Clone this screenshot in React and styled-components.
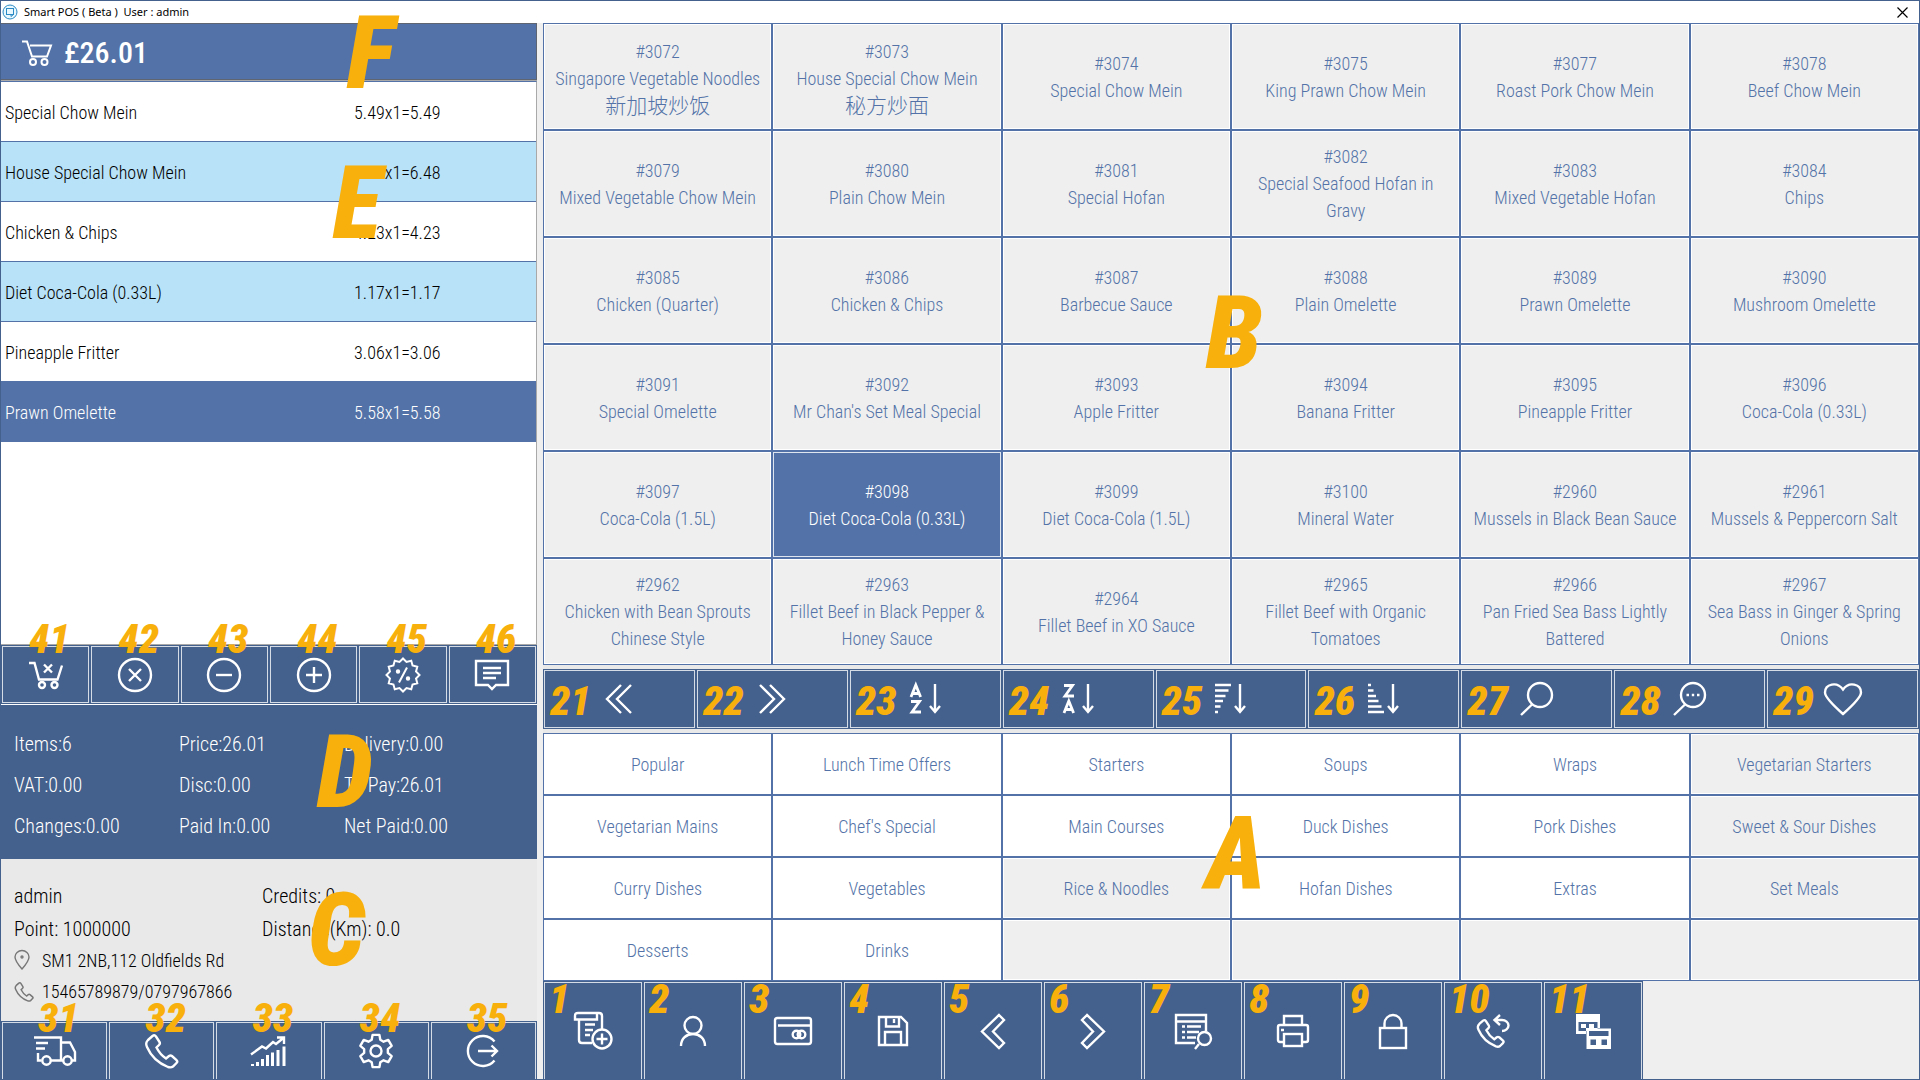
import React, { useState } from "react";
import styled, { createGlobalStyle, ThemeProvider, css } from "styled-components";

const theme = {
  navy: "#44608c",
  blue: "#5373a8",
  sky: "#b8e2f7",
  grey: "#efefef",
  panel: "#e9e9e9",
  orange: "#f8b00c",
};

const GlobalStyle = createGlobalStyle`
  * { box-sizing: border-box; }
  body { margin: 0; background: #efefef; }
  button { font: inherit; color: inherit; border: 0; padding: 0; margin: 0; cursor: pointer; border-radius: 0; }
  svg { display: block; flex: none; }
`;

const Window = styled.div`
  display: flex;
  flex-direction: column;
  height: 100vh;
  min-height: 900px;
  border: 1px solid ${(p) => p.theme.navy};
  background: ${(p) => p.theme.grey};
  font-family: "Roboto Condensed", Roboto, "Noto Sans CJK SC", sans-serif;
  font-weight: 300;
  font-size: 18px;
`;

const TitleBar = styled.header`
  display: flex;
  align-items: center;
  gap: 6px;
  height: 22px;
  flex: none;
  padding: 0 11px 0 1px;
  background: #fff;
  color: #000;
`;

const Title = styled.h1`
  flex: 1;
  margin: 0;
  font: 400 11px/20px "Noto Sans", sans-serif;
  white-space: pre;
`;

const CloseButton = styled.button`
  background: none;
`;

const Body = styled.main`
  flex: 1;
  min-height: 0;
  display: grid;
  grid-template-columns: minmax(0, 536fr) minmax(0, 1376fr);
  gap: 6px;
`;

const Column = styled.div`
  display: flex;
  flex-direction: column;
  min-height: 0;
`;

const RightColumn = styled(Column)`
  background: ${(p) => p.theme.panel};
`;

const Marker = styled.span`
  position: absolute;
  left: ${(p) => p.$left}px;
  top: ${(p) => p.$top}px;
  z-index: 2;
  color: ${(p) => p.theme.orange};
  font-style: italic;
  font-weight: 900;
  font-size: ${(p) => (p.$large ? 102 : 41)}px;
  line-height: ${(p) => (p.$large ? 74 : 30)}px;
  pointer-events: none;
`;

const Total = styled.section`
  position: relative;
  display: flex;
  align-items: center;
  gap: 12px;
  height: 58px;
  flex: none;
  padding: 2px 0 0 21px;
  background: ${(p) => p.theme.blue};
  border-top: 1px solid #5f6672;
  border-bottom: 1px solid #a9a9a9;
  box-shadow: inset -1px -1px #5f6672;
  color: #fff;
`;

const TotalAmount = styled.output`
  font-size: 30px;
  font-weight: 500;
  line-height: 36px;
`;

const OrderPanel = styled.section`
  position: relative;
  flex: 1;
  min-height: 0;
  background: #fff;
  border-top: 1px solid ${(p) => p.theme.blue};
  border-right: 1px solid #a9a9a9;
  border-bottom: 1px solid #a9a9a9;
`;

const OrderTable = styled.table`
  width: 100%;
  border-collapse: separate;
  border-spacing: 0;
  table-layout: fixed;
`;

const OrderRow = styled.tr`
  height: 60px;
  color: #000;
  background: ${(p) => (p.$striped ? p.theme.sky : "#fff")};
  ${(p) =>
    p.$selected &&
    css`
      color: #fff;
      background: ${p.theme.blue};
    `}
`;

const OrderCell = styled.td`
  width: ${(p) => p.$width};
  padding: 2px 0 0 ${(p) => (p.$first ? 4 : 0)}px;
  border-bottom: 1px solid ${(p) => p.theme.blue};
  text-align: left;
`;

const ButtonBar = styled.nav`
  display: grid;
  grid-auto-flow: column;
  grid-auto-columns: minmax(0, 1fr);
  flex: none;
  height: ${(p) => p.$height}px;
  margin: ${(p) => p.$margin || "0"};
  background: ${(p) => p.theme.navy};
  border-bottom: ${(p) => (p.$rule ? "1px solid #fff" : "0")};
`;

const IconButton = styled.button`
  position: relative;
  display: flex;
  align-items: center;
  justify-content: center;
  margin: 1px;
  background: ${(p) => p.theme.navy};
  border: 1px solid #d5dce6;
  border-bottom-width: ${(p) => (p.$open ? 0 : 1)}px;
  margin-bottom: ${(p) => (p.$open ? 0 : 1)}px;
  color: #fff;
`;

const Summary = styled.section`
  position: relative;
  flex: none;
  display: grid;
  grid-template-columns: repeat(3, 1fr);
  grid-auto-rows: 41px;
  align-items: center;
  height: 154px;
  padding: 18px 28px 0 13px;
  background: ${(p) => p.theme.navy};
  color: #fff;
  font-size: 20px;
`;

const Customer = styled.section`
  position: relative;
  flex: none;
  display: grid;
  grid-template-columns: 1fr 1fr;
  grid-template-rows: 33px 33px 30px 33px;
  align-items: center;
  height: 162px;
  padding: 20px 27px 0 13px;
  background: ${(p) => p.theme.panel};
  color: #000;
  font-size: 20px;
`;

const Contact = styled.span`
  grid-column: 1 / -1;
  display: flex;
  align-items: center;
  font-size: 18px;
`;

const ContactIcon = styled.span`
  display: flex;
  width: 28px;
  color: #777;
`;

const CellGrid = styled.section`
  position: relative;
  display: grid;
  grid-template-columns: repeat(6, minmax(0, 1fr));
  grid-auto-rows: minmax(0, 1fr);
  flex: ${(p) => (p.$height ? "none" : "1")};
  height: ${(p) => (p.$height ? p.$height + "px" : "auto")};
  min-height: 0;
`;

const Cell = styled.button`
  display: flex;
  flex-direction: column;
  align-items: center;
  justify-content: center;
  padding: 0 8px;
  line-height: 27px;
  text-align: center;
  color: ${(p) => p.theme.blue};
  background: ${(p) => (p.$filled ? p.theme.grey : "#fff")};
  border: 1px solid ${(p) => p.theme.blue};
  box-shadow: inset 0 0 0 1px #fff;
  ${(p) =>
    p.$selected &&
    css`
      color: #fff;
      background: ${p.theme.blue};
      box-shadow: inset 0 0 0 1px #dfe5ef;
    `}
`;

const Translation = styled.span`
  font: 300 21px/24px "Noto Sans CJK SC", sans-serif;
`;

const Footer = styled.footer`
  flex: none;
  display: grid;
  grid-template-columns: minmax(0, 1100fr) minmax(0, 276fr);
  height: 98px;
  background: ${(p) => p.theme.grey};
`;

const Svg = ({ w, h, sw = 2.4, children }) => (
  <svg width={w} height={h} viewBox={`0 0 ${w} ${h}`} fill="none" stroke="currentColor" strokeWidth={sw} overflow="visible" aria-hidden="true">
    {children}
  </svg>
);

const polar = (cx, cy, list) =>
  list.map(([r, deg]) => {
    const a = ((deg - 90) * Math.PI) / 180;
    return `${(cx + r * Math.cos(a)).toFixed(2)},${(cy + r * Math.sin(a)).toFixed(2)}`;
  }).join(" ");

const badgePoints = polar(17, 17, Array.from({ length: 24 }, (_, i) => [i % 2 ? 13.5 : 16.5, i * 15]));
const gearPoints = polar(
  17, 17,
  Array.from({ length: 6 }, (_, i) => [[12, i * 60 - 21], [16.5, i * 60 - 12], [16.5, i * 60 + 12], [12, i * 60 + 21]]).flat()
);

const phonePath =
  "M4 6 L8.5 2 Q10.5 .5 12 2.500 L15.500 8 Q16.500 9.500 15 11 L12.500 13.500 Q16 20.500 22 24.500 L25 22 Q26.500 21 28 22 L32.500 26 Q34 27.500 32.500 29 L29 32.500 Q27 34 24 33 Q9 27 3 13 Q1 9 4 6Z";

const ArrowDown = () => <path d="M25 0V28M20 22L25 28L30 22" />;

const icons = {
  app: (
    <Svg w={16} h={16} sw={1}>
      <circle cx="8" cy="8" r="7" stroke="#2b8bc4" fill="#e8f6fd" />
      <rect x="4.500" y="4.500" width="7" height="6" stroke="#2b8bc4" />
      <path d="M9 10.500V12.500L11.500 10.500" stroke="#2b8bc4" />
    </Svg>
  ),
  close: <Svg w={11} h={11} sw={1.2}><path d="M.5.5L10.500 10.500M10.500.5L.5 10.500" /></Svg>,
  cart: (
    <Svg w={30} h={26} sw={2}>
      <path d="M0 1.500H5L10 16.500H25L29 5.500H8" />
      <circle cx="11" cy="22" r="3" /><circle cx="22.500" cy="22" r="3" />
    </Svg>
  ),
  cartX: (
    <Svg w={34} h={28}>
      <path d="M0 2H5.500L10 18.500H28.500L33 4.500M15 3.500L23 11.500M23 3.500L15 11.500" />
      <circle cx="13" cy="24" r="3" /><circle cx="25.500" cy="24" r="3" />
    </Svg>
  ),
  remove: <Svg w={34} h={34}><circle cx="17" cy="17" r="16" /><path d="M11 11L23 23M23 11L11 23" /></Svg>,
  minus: <Svg w={34} h={34}><circle cx="17" cy="17" r="16" /><path d="M9 17H25" /></Svg>,
  plus: <Svg w={34} h={34}><circle cx="17" cy="17" r="16" /><path d="M9 17H25M17 9V25" /></Svg>,
  percent: (
    <Svg w={34} h={34} sw={2}>
      <polygon points={badgePoints} />
      <path d="M21 9.500L13 24.500" />
      <circle cx="12" cy="13.500" r="1.200" fill="currentColor" /><circle cx="22" cy="20.500" r="1.200" fill="currentColor" />
    </Svg>
  ),
  note: <Svg w={34} h={30}><path d="M1 1H33V25H21L17 29L13 25H1ZM8 8H26M8 13H26M8 18H21" /></Svg>,
  truck: (
    <Svg w={42} h={30}>
      <path d="M0 1.500H27V24.500M27 6.500H36L41 16V24.500H38M30 24.500H17M7.500 24.500H4V17M2 7H14M2 12.500H11" />
      <circle cx="12.500" cy="24.500" r="4.200" /><circle cx="33.500" cy="24.500" r="4.200" />
    </Svg>
  ),
  phone: <Svg w={35} h={35}><path d={phonePath} /></Svg>,
  chart: (
    <Svg w={35} h={30}>
      <path d="M0 18.500L11 10.500L15 12.500L22 6L25 8L33 1.500M26 1.500H33V8" />
      <path strokeWidth="3" d="M1.500 30V28M6.500 30V26M11.500 30V23M16.500 30V19M21.500 30V16.500M27 30V14M33 30V10.500" />
    </Svg>
  ),
  gear: <Svg w={34} h={34}><polygon points={gearPoints} strokeLinejoin="round" /><circle cx="17" cy="17" r="5.500" /></Svg>,
  logout: <Svg w={32} h={32}><path d="M27.500 6.500A15 15 0 1 0 27.500 25.500M11 16H30M24.500 10.500L30 16L24.500 21.500" /></Svg>,
  pin: <Svg w={16} h={20} sw={1.4}><path d="M8 19Q1 11 1 7A7 6.500 0 0 1 15 7Q15 11 8 19Z" /><circle cx="8" cy="7" r="1" /></Svg>,
  smallPhone: <svg width="20" height="20" viewBox="0 0 35 35" fill="none" stroke="currentColor" strokeWidth="2.600" aria-hidden="true"><path d={phonePath} /></svg>,
  first: <Svg w={26} h={30}><path d="M15 1L1 15L15 29M25 1L11 15L25 29" /></Svg>,
  last: <Svg w={26} h={30}><path d="M1 1L15 15L1 29M11 1L25 15L11 29" /></Svg>,
  az: <Svg w={31} h={30}><path strokeWidth="2.800" d="M1 13L5.800 1L10.600 13M2.800 9.500H8.800M1 17.500H9.500L2 28H11" /><ArrowDown /></Svg>,
  za: <Svg w={31} h={30}><path strokeWidth="2.800" d="M1 1.500H9.500L2 12H11M1 29L5.800 17L10.600 29M2.800 25.500H8.800" /><ArrowDown /></Svg>,
  desc: <Svg w={31} h={30}><path d="M0 1H16M0 6.500H13.500M0 12H10.500M0 17H8M0 22.500H5.500M0 28H3" /><ArrowDown /></Svg>,
  asc: <Svg w={31} h={30}><path d="M0 1H3M0 6.500H5.500M0 12H8M0 17H10.500M0 22.500H13.500M0 28H16" /><ArrowDown /></Svg>,
  search: <Svg w={33} h={34}><circle cx="20" cy="13" r="12" /><path d="M12 22.500L1 33" /></Svg>,
  searchDots: (
    <Svg w={33} h={34}>
      <circle cx="20" cy="13" r="12" /><path d="M12 22.500L1 33M13.500 13H16M18.800 13H21.200M24 13H26.500" />
    </Svg>
  ),
  heart: <Svg w={38} h={32}><path d="M19 31Q1 15 1 9.500C1 1 13-2 19 6.500C25-2 37 1 37 9.500Q37 15 19 31Z" /></Svg>,
  receipt: (
    <Svg w={38} h={38}>
      <path d="M4 7.500H1V4Q1 1 4 1H25Q28 1 28 4V17M23 1V7.500H5V28Q5 31 8 31H18M11 12.500H21M11 18H19M11 23H16" />
      <circle cx="28" cy="27" r="9.500" /><path d="M22.500 27H33.500M28 21.500V32.500" />
    </Svg>
  ),
  user: <Svg w={26} h={30}><circle cx="13" cy="9.500" r="8.500" /><path d="M1 30C1 14 25 14 25 30" /></Svg>,
  card: (
    <Svg w={38} h={28}>
      <rect x="1" y="1" width="36" height="26" rx="2.500" /><path d="M4 8.500H37" />
      <circle cx="22.500" cy="17.500" r="3.800" /><circle cx="27.500" cy="17.500" r="3.800" />
    </Svg>
  ),
  save: <Svg w={30} h={30}><path d="M1 1H23L29 7V29H1ZM8 1V10.500H21V1M16 3V7M7 29V16H23V29" /></Svg>,
  prev: <Svg w={24} h={35}><path d="M18 1L23 6L12 17.500L23 29L18 34L1 17.500Z" /></Svg>,
  next: <Svg w={24} h={35}><path d="M6 1L1 6L12 17.500L1 29L6 34L23 17.500Z" /></Svg>,
  listSearch: (
    <Svg w={37} h={35}>
      <path d="M20 29H1V1H31V17M1 7.500H31M7 12.500H10M12 12.500H26M7 18H10M12 18H24M7 23.500H10M12 23.500H21M24 30L20 35" />
      <circle cx="29.500" cy="24.500" r="6.500" />
    </Svg>
  ),
  printer: (
    <Svg w={32} h={32}>
      <path d="M7 27H3Q1 27 1 25V12Q1 10 3 10H29Q31 10 31 12V25Q31 27 29 27H25M7 10V1H25V10M4 15H7" />
      <rect x="7" y="19" width="18" height="12" />
    </Svg>
  ),
  lock: <Svg w={28} h={35}><rect x="1" y="14" width="26" height="20" /><path d="M5.500 14V9.500A8.500 8.500 0 0 1 22.500 9.500V14" /></Svg>,
  callback: (
    <Svg w={34} h={34}>
      <g transform="translate(0 5) scale(.83)"><path strokeWidth="2.800" d={phonePath} /></g>
      <path d="M19 6H26A6.500 5.500 0 0 1 26 17M24 1L18.500 6L24 11" />
    </Svg>
  ),
  tables: (
    <svg width="35" height="35" viewBox="0 0 35 35" fill="currentColor" fillRule="evenodd" aria-hidden="true">
      <path d="M0 0H24V14H10V20H0ZM2.500 8H21.500V17H2.500Z" />
      <path d="M5 10H10V14H5ZM13 10H18V14H13Z" />
      <path d="M10.500 14.500H35V35H10.500ZM13 17H32.500V22H13ZM14.500 25.500H20V31H14.500ZM25.500 25.500H31V31H25.500Z" />
    </svg>
  ),
};

const orders = [
  ["Special Chow Mein", "5.49x1=5.49"],
  ["House Special Chow Mein", "6.48x1=6.48"],
  ["Chicken & Chips", "4.23x1=4.23"],
  ["Diet Coca-Cola (0.33L)", "1.17x1=1.17"],
  ["Pineapple Fritter", "3.06x1=3.06"],
  ["Prawn Omelette", "5.58x1=5.58"],
];

const products = [
  [3072, "Singapore Vegetable Noodles", "新加坡炒饭"],
  [3073, "House Special Chow Mein", "秘方炒面"],
  [3074, "Special Chow Mein"],
  [3075, "King Prawn Chow Mein"],
  [3077, "Roast Pork Chow Mein"],
  [3078, "Beef Chow Mein"],
  [3079, "Mixed Vegetable Chow Mein"],
  [3080, "Plain Chow Mein"],
  [3081, "Special Hofan"],
  [3082, "Special Seafood Hofan in Gravy"],
  [3083, "Mixed Vegetable Hofan"],
  [3084, "Chips"],
  [3085, "Chicken (Quarter)"],
  [3086, "Chicken & Chips"],
  [3087, "Barbecue Sauce"],
  [3088, "Plain Omelette"],
  [3089, "Prawn Omelette"],
  [3090, "Mushroom Omelette"],
  [3091, "Special Omelette"],
  [3092, "Mr Chan's Set Meal Special"],
  [3093, "Apple Fritter"],
  [3094, "Banana Fritter"],
  [3095, "Pineapple Fritter"],
  [3096, "Coca-Cola (0.33L)"],
  [3097, "Coca-Cola (1.5L)"],
  [3098, "Diet Coca-Cola (0.33L)"],
  [3099, "Diet Coca-Cola (1.5L)"],
  [3100, "Mineral Water"],
  [2960, "Mussels in Black Bean Sauce"],
  [2961, "Mussels & Peppercorn Salt"],
  [2962, "Chicken with Bean Sprouts Chinese Style"],
  [2963, "Fillet Beef in Black Pepper & Honey Sauce"],
  [2964, "Fillet Beef in XO Sauce"],
  [2965, "Fillet Beef with Organic Tomatoes"],
  [2966, "Pan Fried Sea Bass Lightly Battered"],
  [2967, "Sea Bass in Ginger & Spring Onions"],
];

const categories = [
  "Popular", "Lunch Time Offers", "Starters", "Soups", "Wraps", "Vegetarian Starters",
  "Vegetarian Mains", "Chef's Special", "Main Courses", "Duck Dishes", "Pork Dishes", "Sweet & Sour Dishes",
  "Curry Dishes", "Vegetables", "Rice & Noodles", "Hofan Dishes", "Extras", "Set Meals",
  "Desserts", "Drinks", "", "", "", "",
];
const filledCategories = new Set([5, 11, 14, 17, 20, 21, 22, 23]);

const lineTools = [["41", "cartX", "Clear basket"], ["42", "remove", "Remove line"], ["43", "minus", "Decrease"], ["44", "plus", "Increase"], ["45", "percent", "Discount"], ["46", "note", "Note"]];
const systemTools = [["31", "truck", "Delivery"], ["32", "phone", "Calls"], ["33", "chart", "Reports"], ["34", "gear", "Settings"], ["35", "logout", "Log out"]];
const sortTools = [["21", "first", "Previous page"], ["22", "last", "Next page"], ["23", "az", "Sort A to Z"], ["24", "za", "Sort Z to A"], ["25", "desc", "Sort descending"], ["26", "asc", "Sort ascending"], ["27", "search", "Search"], ["28", "searchDots", "Search by code"], ["29", "heart", "Favourites"]];
const orderTools = [["1", "receipt", "New order"], ["2", "user", "Customer"], ["3", "card", "Payment"], ["4", "save", "Save"], ["5", "prev", "Previous"], ["6", "next", "Next"], ["7", "listSearch", "Find order"], ["8", "printer", "Print"], ["9", "lock", "Lock"], ["10", "callback", "Call back"], ["11", "tables", "Tables"]];

const totals = ["Items:6", "Price:26.01", "Delivery:0.00", "VAT:0.00", "Disc:0.00", "To Pay:26.01", "Changes:0.00", "Paid In:0.00", "Net Paid:0.00"];

function Tools({ items, left, top, open, ...bar }) {
  return (
    <ButtonBar {...bar}>
      {items.map(([number, icon, label]) => (
        <IconButton key={number} type="button" aria-label={label} $open={open}>
          {icons[icon]}
          <Marker $left={left} $top={top}>{number}</Marker>
        </IconButton>
      ))}
    </ButtonBar>
  );
}

export default function App() {
  const [product, setProduct] = useState(3098);
  const [line, setLine] = useState(5);

  return (
    <ThemeProvider theme={theme}>
      <GlobalStyle />
      <Window>
        <TitleBar>
          {icons.app}
          <Title>{"Smart POS ( Beta )  User : admin"}</Title>
          <CloseButton type="button" aria-label="Close">{icons.close}</CloseButton>
        </TitleBar>
        <Body>
          <Column>
            <Total>
              {icons.cart}
              <TotalAmount>£26.01</TotalAmount>
              <Marker $large $left={346} $top={-8}>F</Marker>
            </Total>
            <OrderPanel>
              <OrderTable>
                <tbody>
                  {orders.map(([name, sum], i) => (
                    <OrderRow key={name} $striped={i % 2 === 1} $selected={i === line} onClick={() => setLine(i)}>
                      <OrderCell $first $width="66%">{name}</OrderCell>
                      <OrderCell $width="34%">{sum}</OrderCell>
                    </OrderRow>
                  ))}
                </tbody>
              </OrderTable>
              <Marker $large $left={332} $top={84}>E</Marker>
            </OrderPanel>
            <Tools items={lineTools} $height={60} $rule left={26} top={-23} />
            <Summary>
              {totals.map((text) => <span key={text}>{text}</span>)}
              <Marker $large $left={316} $top={30}>D</Marker>
            </Summary>
            <Customer>
              <span>admin</span>
              <span>Credits: 0</span>
              <span>Point: 1000000</span>
              <span>Distance(Km): 0.0</span>
              <Contact><ContactIcon>{icons.pin}</ContactIcon>SM1 2NB,112 Oldfields Rd</Contact>
              <Contact><ContactIcon>{icons.smallPhone}</ContactIcon>15465789879/0797967866</Contact>
              <Marker $large $left={307} $top={34}>C</Marker>
            </Customer>
            <Tools items={systemTools} $height={58} open left={35} top={-20} />
          </Column>
          <RightColumn>
            <CellGrid>
              {products.map(([id, name, translation]) => (
                <Cell key={id} type="button" $filled $selected={id === product} onClick={() => setProduct(id)}>
                  <span>#{id}</span>
                  <span>{name}</span>
                  {translation && <Translation lang="zh">{translation}</Translation>}
                </Cell>
              ))}
              <Marker $large $left={663} $top={273}>B</Marker>
            </CellGrid>
            <Tools items={sortTools} $height={60} $margin="4px 0" left={5} top={15} />
            <CellGrid $height={248}>
              {categories.map((name, i) => (
                <Cell key={i} type="button" $filled={filledCategories.has(i)}>{name}</Cell>
              ))}
              <Marker $large $left={663} $top={84}>A</Marker>
            </CellGrid>
            <Footer>
              <Tools items={orderTools} $height={98} open left={4} top={1} />
            </Footer>
          </RightColumn>
        </Body>
      </Window>
    </ThemeProvider>
  );
}
